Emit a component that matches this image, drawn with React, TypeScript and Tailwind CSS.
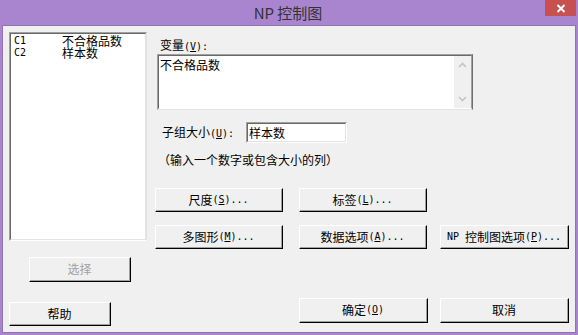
import React from "react";

function L({ children }: { children: React.ReactNode }) {
  return <span className="font-['DejaVu_Sans_Mono',monospace] text-[10px]">{children}</span>;
}

function U({ children }: { children: React.ReactNode }) {
  return <span className="underline underline-offset-[1px]">{children}</span>;
}

function Btn({
  className,
  children,
  disabled,
}: {
  className: string;
  children: React.ReactNode;
  disabled?: boolean;
}) {
  return (
    <div
      className={`box-border border border-t-white border-l-white border-b-black border-r-black bg-[#F0F0F0] ${className}`}
    >
      <div
        className={`box-border h-full w-full border-b border-r border-b-[#A0A0A0] border-r-[#A0A0A0] flex items-center justify-center leading-[12px] whitespace-nowrap ${
          disabled ? "text-[#A0A0A0]" : "text-black"
        }`}
      >
        {children}
      </div>
    </div>
  );
}

function Chevron({ up }: { up?: boolean }) {
  return (
    <svg width="9" height="6" viewBox="0 0 9 6">
      <path
        d={up ? "M1 5L4.5 1.5L8 5" : "M1 1L4.5 4.5L8 1"}
        fill="none"
        stroke="#C4C4C4"
        strokeWidth="1.6"
      />
    </svg>
  );
}

export default function App() {
  return (
    <div className="w-[578px] h-[335px] bg-[#A985CF] overflow-hidden font-['Noto_Sans_CJK_SC',sans-serif] text-[12px] text-black">
      {/* Title bar */}
      <div className="h-[25px] flex">
        <div className="flex-1" />
        <div className="text-[15px] leading-[25px] text-[#333] whitespace-nowrap">NP 控制图</div>
        <div className="flex-1 flex justify-end pr-[2px]">
          <div className="w-[31px] h-[16px] bg-[#C75050] flex items-center justify-center">
            <svg width="10" height="9" viewBox="0 0 10 9">
              <path d="M1.5 1L8.5 8M8.5 1L1.5 8" stroke="white" strokeWidth="2" />
            </svg>
          </div>
        </div>
      </div>

      {/* Client */}
      <div className="ml-[2px] w-[574px] h-[308px] box-border border border-[#8F73B2] bg-[#F0F0F0] flex">
        {/* Left column */}
        <div className="w-[152px] flex flex-col pl-[6px] pt-[6px]">
          <div className="w-[138px] h-[209px] box-border border border-t-[#A0A0A0] border-l-[#A0A0A0] border-b-white border-r-[#E3E3E3]">
            <div className="h-full w-full box-border border border-t-[#696969] border-l-[#696969] border-b-[#E3E3E3] border-r-[#E3E3E3] bg-white pl-[3px] pt-[1px]">
              <div className="flex h-[12px] items-center leading-[12px]">
                <span className="w-[48px] font-['DejaVu_Sans_Mono',monospace] text-[10px]">C1</span>
                <span>不合格品数</span>
              </div>
              <div className="flex h-[12px] items-center leading-[12px]">
                <span className="w-[48px] font-['DejaVu_Sans_Mono',monospace] text-[10px]">C2</span>
                <span>样本数</span>
              </div>
            </div>
          </div>
          <Btn className="mt-[16px] ml-[20px] w-[102px] h-[25px]" disabled>
            选择
          </Btn>
          <Btn className="mt-[20px] w-[102px] h-[24px]">帮助</Btn>
        </div>

        {/* Right column */}
        <div className="flex-1 flex flex-col">
          <div className="mt-[13px] ml-[5px] h-[12px] leading-[12px] whitespace-nowrap">
            变量
            <L>
              (<U>V</U>):
            </L>
          </div>
          <div className="mt-[3px] ml-[2px] w-[316px] h-[56px] box-border border border-t-[#A0A0A0] border-l-[#A0A0A0] border-r-[#6E6E6E] border-b-[#E3E3E3]">
            <div className="h-full w-full box-border border border-t-[#696969] border-l-[#696969] border-r-[#A0A0A0] border-b-white bg-white flex">
              <div className="flex-1 pl-[1px] pt-[3px] leading-[12px]">不合格品数</div>
              <div className="w-[17px] h-full bg-[#F0F0F0] flex flex-col justify-between items-center py-[6px]">
                <Chevron up />
                <Chevron />
              </div>
            </div>
          </div>

          <div className="mt-[12px] flex items-center h-[21px]">
            <div className="ml-[7px] w-[84px] leading-[12px] whitespace-nowrap">
              子组大小
              <L>
                (<U>U</U>):
              </L>
            </div>
            <div className="w-[101px] h-[21px] box-border border border-t-[#A0A0A0] border-l-[#A0A0A0] border-b-white border-r-white">
              <div className="h-full w-full box-border border border-t-[#696969] border-l-[#696969] border-b-[#E3E3E3] border-r-[#E3E3E3] bg-white flex items-center pl-[1px] leading-[12px]">
                样本数
              </div>
            </div>
          </div>

          <div className="mt-[11px] ml-[3px] h-[12px] leading-[12px] whitespace-nowrap">
            （输入一个数字或包含大小的列）
          </div>

          <div className="mt-[22px] flex">
            <Btn className="w-[128px] h-[24px]">
              尺度
              <L>
                (<U>S</U>)...
              </L>
            </Btn>
            <Btn className="ml-[16px] w-[128px] h-[24px]">
              标签
              <L>
                (<U>L</U>)...
              </L>
            </Btn>
          </div>

          <div className="mt-[13px] flex">
            <Btn className="w-[128px] h-[24px]">
              多图形
              <L>
                (<U>M</U>)...
              </L>
            </Btn>
            <Btn className="ml-[16px] w-[128px] h-[24px]">
              数据选项
              <L>
                (<U>A</U>)...
              </L>
            </Btn>
            <Btn className="ml-[13px] w-[129px] h-[24px]">
              <L>NP</L>
              <span className="ml-[6px]">控制图选项</span>
              <L>
                (<U>P</U>)...
              </L>
            </Btn>
          </div>

          <div className="mt-[49px] flex">
            <Btn className="ml-[144px] w-[129px] h-[25px]">
              确定
              <L>
                (<U>O</U>)
              </L>
            </Btn>
            <Btn className="ml-[12px] w-[129px] h-[25px]">取消</Btn>
          </div>
        </div>
      </div>
    </div>
  );
}
